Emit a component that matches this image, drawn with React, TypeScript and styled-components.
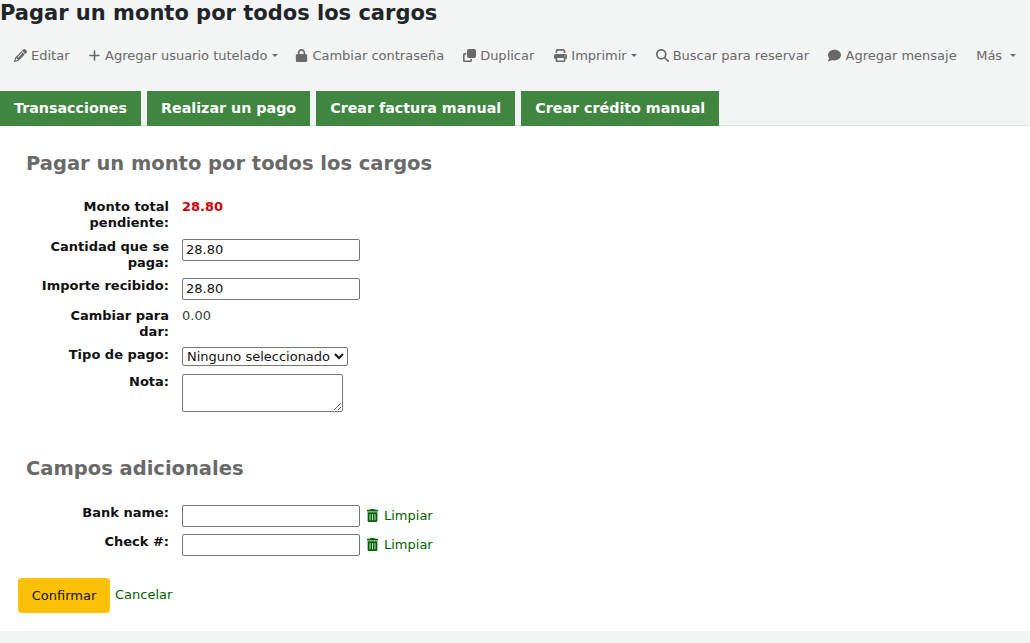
import { FunctionComponent, ReactNode } from "react";
import styled, { createGlobalStyle } from "styled-components";
import {
  FaPencil,
  FaPlus,
  FaLock,
  FaClone,
  FaPrint,
  FaMagnifyingGlass,
  FaComment,
  FaTrashCan,
} from "react-icons/fa6";

const GlobalStyle = createGlobalStyle`
  html, body {
    margin: 0;
    padding: 0;
    background: #f3f4f4;
    font-family: "DejaVu Sans", sans-serif;
    font-size: 13px;
    color: #212529;
  }
`;

const Page = styled.div`
  width: 1030px;
  height: 643px;
  overflow: hidden;
  background: #f3f4f4;
`;

const Title = styled.h1`
  margin: 0;
  height: 23px;
  padding-top: 1px;
  font-size: 21px;
  line-height: 24px;
  font-weight: 700;
  color: #212529;
`;

const Toolbar = styled.div`
  display: flex;
  align-items: center;
  height: 30px;
  margin-top: 16px;
  padding-left: 14px;
  margin-bottom: 21px;
`;

const ToolItem = styled.span<{ $gap?: number; $inner?: number }>`
  display: inline-flex;
  align-items: center;
  gap: ${(p) => p.$inner ?? 4}px;
  margin-right: ${(p) => p.$gap ?? 19}px;
  font-size: 13px;
  color: #696969;
  white-space: nowrap;
  svg {
    font-size: 13px;
    flex: none;
  }
`;

const Caret = styled.i<{ $left?: number }>`
  display: inline-block;
  width: 0;
  height: 0;
  margin-left: ${(p) => p.$left ?? 0}px;
  border-top: 3.9px solid #696969;
  border-left: 3.9px solid transparent;
  border-right: 3.9px solid transparent;
`;

const Tabs = styled.div`
  position: relative;
  display: flex;
  gap: 6px;
  height: 35px;
  margin-bottom: -1px;
`;

const Tab = styled.a`
  display: flex;
  align-items: center;
  padding: 0 14px 2px;
  background: #408540;
  color: #fff;
  font-size: 14.27px;
  font-weight: 700;
`;

const Panel = styled.div`
  height: 505px;
  border-top: 1px solid #dfe1e1;
  background: #fff;
  padding: 0 18px;
`;

const Heading = styled.h2<{ $top: number }>`
  margin: ${(p) => p.$top}px 0 0 8px;
  font-size: 19.5px;
  line-height: 24px;
  font-weight: 700;
  color: #696969;
`;

const Rows = styled.ol<{ $top: number }>`
  list-style: none;
  margin: ${(p) => p.$top}px 0 0;
  padding: 0;
`;

const Row = styled.li<{ $height: number }>`
  display: flex;
  align-items: flex-start;
  height: ${(p) => p.$height}px;
`;

const Label = styled.label`
  width: 130px;
  margin: 0 13px 0 21px;
  flex: none;
  text-align: right;
  font-size: 13px;
  line-height: 16px;
  font-weight: 700;
  color: #111;
`;

const Owed = styled.span`
  font-size: 13px;
  line-height: 16px;
  font-weight: 700;
  color: #c00;
`;

const Value = styled.span`
  font-size: 13px;
  line-height: 16px;
  color: #3d3d3d;
`;

const Input = styled.input`
  box-sizing: border-box;
  width: 178px;
  height: 22px;
  margin: 0;
  padding: 0 3px 2px;
  border: 1px solid #767676;
  border-radius: 2px;
  background: #fff;
  font-family: "DejaVu Sans", sans-serif;
  font-size: 13px;
  color: #111;
  outline: none;
`;

const Select = styled.select`
  box-sizing: border-box;
  width: 166px;
  height: 19px;
  margin: 0;
  border: 1px solid #767676;
  border-radius: 2px;
  background: #fff;
  font-family: "DejaVu Sans", sans-serif;
  font-size: 13px;
  color: #111;
`;

const Note = styled.textarea`
  box-sizing: border-box;
  display: block;
  width: 161px;
  height: 38px;
  margin: 0;
  border: 1px solid #767676;
  border-radius: 2px;
  background: #fff;
`;

const ClearLink = styled.a`
  display: inline-flex;
  align-items: center;
  gap: 5px;
  height: 21px;
  margin-left: 6px;
  font-size: 13px;
  color: #006100;
  svg {
    font-size: 13px;
  }
`;

const Actions = styled.div`
  display: flex;
  align-items: flex-start;
  margin-top: 22px;
`;

const Submit = styled.button`
  box-sizing: border-box;
  width: 92px;
  height: 35px;
  border: 0;
  border-radius: 4px;
  background: #ffc107;
  font-family: "DejaVu Sans", sans-serif;
  font-size: 13px;
  color: #111;
`;

const Cancel = styled.a`
  margin: 9px 0 0 5px;
  font-size: 13px;
  line-height: 16px;
  color: #006100;
`;

interface FieldProps {
  label: ReactNode;
  height: number;
  children?: ReactNode;
}

const Field: FunctionComponent<FieldProps> = ({ label, height, children }) => (
  <Row $height={height}>
    <Label>{label}</Label>
    {children}
  </Row>
);

const Clear = () => (
  <ClearLink>
    <FaTrashCan />
    Limpiar
  </ClearLink>
);

export default function App() {
  return (
    <Page>
      <GlobalStyle />
      <Title>Pagar un monto por todos los cargos</Title>
      <Toolbar>
        <ToolItem $gap={18}><FaPencil />Editar</ToolItem>
        <ToolItem $gap={17.5} $inner={4.5}><FaPlus />Agregar usuario tutelado<Caret /></ToolItem>
        <ToolItem><FaLock />Cambiar contraseña</ToolItem>
        <ToolItem $gap={20}><FaClone />Duplicar</ToolItem>
        <ToolItem><FaPrint />Imprimir<Caret /></ToolItem>
        <ToolItem><FaMagnifyingGlass />Buscar para reservar</ToolItem>
        <ToolItem $gap={19.5} $inner={4.5}><FaComment />Agregar mensaje</ToolItem>
        <ToolItem>Más<Caret $left={4} /></ToolItem>
      </Toolbar>
      <Tabs>
        <Tab>Transacciones</Tab>
        <Tab>Realizar un pago</Tab>
        <Tab>Crear factura manual</Tab>
        <Tab>Crear crédito manual</Tab>
      </Tabs>
      <Panel>
        <Heading $top={26}>Pagar un monto por todos los cargos</Heading>
        <Rows $top={23}>
          <Field label="Monto total pendiente:" height={40}><Owed>28.80</Owed></Field>
          <Field label="Cantidad que se paga:" height={39}><Input defaultValue="28.80" /></Field>
          <Field label="Importe recibido:" height={30}><Input defaultValue="28.80" /></Field>
          <Field label="Cambiar para dar:" height={39}><Value>0.00</Value></Field>
          <Field label="Tipo de pago:" height={27}>
            <Select defaultValue="">
              <option value="">Ninguno seleccionado</option>
            </Select>
          </Field>
          <Field label="Nota:" height={38}><Note /></Field>
        </Rows>
        <Heading $top={45}>Campos adicionales</Heading>
        <Rows $top={24}>
          <Field label="Bank name:" height={29}><Input /><Clear /></Field>
          <Field label="Check #:" height={22}><Input /><Clear /></Field>
        </Rows>
        <Actions>
          <Submit>Confirmar</Submit>
          <Cancel>Cancelar</Cancel>
        </Actions>
      </Panel>
    </Page>
  );
}
